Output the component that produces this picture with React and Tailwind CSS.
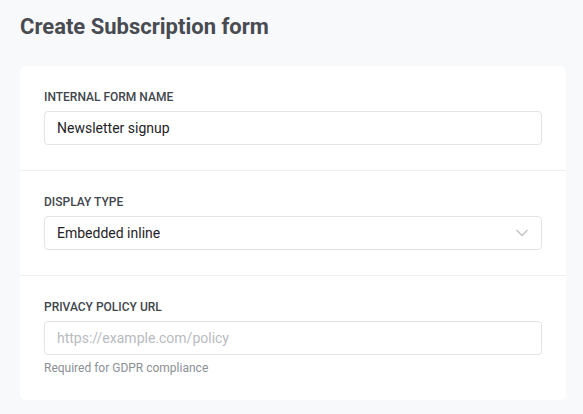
import React from 'react';
import { ChevronDown } from 'lucide-react';

const font = { fontFamily: 'Roboto, "Liberation Sans", sans-serif' };

function Field({ label, children, hint, last }) {
  return (
    <div className={`px-6 pt-[25px] pb-[25px] ${last ? '' : 'border-b border-[#eeeff1]'}`}>
      <label className="block text-[12px] leading-[13px] font-medium uppercase text-[#41464c] mb-[7px]">
        {label}
      </label>
      {children}
      {hint && <p className="mt-[7px] text-[12px] leading-[13px] text-[#8b9096]">{hint}</p>}
    </div>
  );
}

export default function App() {
  return (
    <div className="min-h-screen bg-[#f8f9fb] pl-5 pr-[17px] pt-3 pb-4" style={font}>
      <h1 className="h-7 text-[22px] leading-[30px] font-bold text-[#484c52]">Create Subscription form</h1>

      <div className="mt-[26px] bg-white rounded-md">
        <Field label="Internal form name">
          <input
            defaultValue="Newsletter signup"
            className="w-full h-[34px] px-3 rounded border border-[#e1e3e6] text-[14px] text-[#1f2328] outline-none"
            style={font}
          />
        </Field>

        <Field label="Display type">
          <div className="flex items-center justify-between h-[34px] pl-3 pr-[9px] rounded border border-[#e1e3e6] text-[14px] text-[#1f2328]">
            <span>Embedded inline</span>
            <ChevronDown size={20} strokeWidth={2} className="text-[#c6c8cb]" />
          </div>
        </Field>

        <Field label="Privacy policy URL" hint="Required for GDPR compliance" last>
          <input
            placeholder="https://example.com/policy"
            className="w-full h-[34px] px-3 rounded border border-[#e1e3e6] text-[14px] text-[#1f2328] placeholder:text-[#b8bbbf] outline-none"
            style={font}
          />
        </Field>
      </div>
    </div>
  );
}
